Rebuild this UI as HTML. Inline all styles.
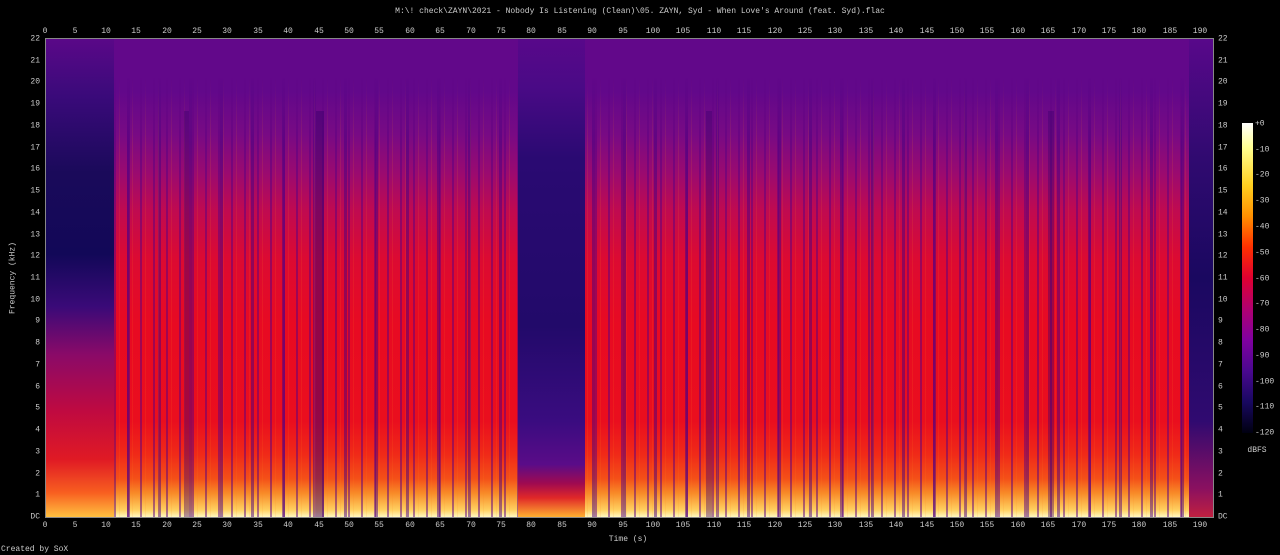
<!DOCTYPE html><html><head><meta charset="utf-8"><style>
*{margin:0;padding:0;box-sizing:border-box}
body{width:1280px;height:555px;background:#000;position:relative;overflow:hidden;font-family:"Liberation Mono","DejaVu Sans Mono",monospace;font-size:8px;color:#ccc}
.t{position:absolute;transform:translateX(-50%);white-space:nowrap;line-height:9px}
.fl{position:absolute;right:1240px;transform:translateY(-50%);line-height:9px}
.fr{position:absolute;left:1218px;transform:translateY(-50%);line-height:9px}
.d{position:absolute;left:1255px;transform:translateY(-50%);line-height:9px}
#plot{position:absolute;left:45px;top:38px;width:1169px;height:480px;border:1px solid #888;overflow:hidden;background:#5a088a}
.s{position:absolute;top:0;height:100%}
.loud{background:linear-gradient(180deg,#62088a 0%,#62088a 11%,#780a84 20%,#9a0a70 28%,#c00a50 36%,#dc0a32 46%,#e80a22 60%,#ea0e1e 80%,#f02a18 87%,#f45018 92%,#f88a28 95%,#ffd060 98.5%,#fff8c0 100%)}
.ov{position:absolute;inset:0;-webkit-mask-image:linear-gradient(180deg,transparent 8%,#000 22%);mask-image:linear-gradient(180deg,transparent 8%,#000 22%);background:repeating-linear-gradient(90deg,rgba(0,0,0,0) 0 3px,rgba(90,0,130,.5) 3px 5px,rgba(0,0,0,0) 5px 8px,rgba(255,140,30,.12) 8px 9px,rgba(0,0,0,0) 9px 13px),repeating-linear-gradient(90deg,rgba(0,0,0,0) 0 19px,rgba(70,0,130,.5) 19px 22px,rgba(0,0,0,0) 22px 31px)}
</style></head><body>
<div class="t" style="left:640px;top:7px">M:\! check\ZAYN\2021 - Nobody Is Listening (Clean)\05. ZAYN, Syd - When Love's Around (feat. Syd).flac</div>
<div id="plot">
<div class="s loud" style="left:68px;width:405px"></div>
<div class="s loud" style="left:539px;width:605px"></div>
<div class="ov"></div>
<div class="s" style="left:0;width:68px;background:linear-gradient(180deg,#5a0888 0%,#3a0a7a 12%,#1a0a5a 28%,#120858 45%,#3a0a78 56%,#8a0a68 66%,#c00a40 78%,#e01a24 88%,#f86020 95%,#ffc040 100%)"></div>
<div class="s" style="left:472px;width:67px;background:linear-gradient(180deg,#58088a 0%,#4a0a86 10%,#2a0a72 25%,#220a6a 60%,#3a0c80 80%,#5a0c88 89%,#a00a50 93%,#e02828 96%,#ffb030 100%)"></div>
<div class="s" style="left:1143px;width:26px;background:linear-gradient(180deg,#58088a 0%,#300a70 25%,#1a0860 50%,#300a70 80%,#8a1060 94%,#c02040 100%)"></div>
<div class="s" style="left:270px;width:8px;top:15%;background:rgba(60,0,110,.5)"></div>
<div class="s" style="left:138px;width:5px;top:15%;background:rgba(60,0,110,.4)"></div>
<div class="s" style="left:660px;width:6px;top:15%;background:rgba(60,0,110,.4)"></div>
<div class="s" style="left:1002px;width:6px;top:15%;background:rgba(60,0,110,.4)"></div>
</div>
<div style="position:absolute;left:1242px;top:123px;width:11px;height:310px;background:linear-gradient(180deg,#fff 0%,#ffff90 8%,#ffd020 20%,#ff9000 30%,#ff3000 40%,#e00030 50%,#b00070 60%,#8000a0 70%,#4a0890 80%,#180860 90%,#000010 100%)"></div>
<span class="d" style="top:124px">+0</span><span class="d" style="top:150px">-10</span><span class="d" style="top:175px">-20</span><span class="d" style="top:201px">-30</span><span class="d" style="top:227px">-40</span><span class="d" style="top:253px">-50</span><span class="d" style="top:279px">-60</span><span class="d" style="top:304px">-70</span><span class="d" style="top:330px">-80</span><span class="d" style="top:356px">-90</span><span class="d" style="top:382px">-100</span><span class="d" style="top:407px">-110</span><span class="d" style="top:433px">-120</span>
<div class="t" style="left:1257px;top:446px">dBFS</div>
<div class="t" style="left:628px;top:535px">Time (s)</div>
<div style="position:absolute;left:1px;top:545px;line-height:9px">Created by SoX</div>
<div style="position:absolute;left:13px;top:278px;transform:translate(-50%,-50%) rotate(-90deg);white-space:nowrap">Frequency (kHz)</div>
<span class="t" style="left:45px;top:27px">0</span><span class="t" style="left:75px;top:27px">5</span><span class="t" style="left:106px;top:27px">10</span><span class="t" style="left:136px;top:27px">15</span><span class="t" style="left:167px;top:27px">20</span><span class="t" style="left:197px;top:27px">25</span><span class="t" style="left:227px;top:27px">30</span><span class="t" style="left:258px;top:27px">35</span><span class="t" style="left:288px;top:27px">40</span><span class="t" style="left:319px;top:27px">45</span><span class="t" style="left:349px;top:27px">50</span><span class="t" style="left:379px;top:27px">55</span><span class="t" style="left:410px;top:27px">60</span><span class="t" style="left:440px;top:27px">65</span><span class="t" style="left:471px;top:27px">70</span><span class="t" style="left:501px;top:27px">75</span><span class="t" style="left:531px;top:27px">80</span><span class="t" style="left:562px;top:27px">85</span><span class="t" style="left:592px;top:27px">90</span><span class="t" style="left:623px;top:27px">95</span><span class="t" style="left:653px;top:27px">100</span><span class="t" style="left:683px;top:27px">105</span><span class="t" style="left:714px;top:27px">110</span><span class="t" style="left:744px;top:27px">115</span><span class="t" style="left:775px;top:27px">120</span><span class="t" style="left:805px;top:27px">125</span><span class="t" style="left:835px;top:27px">130</span><span class="t" style="left:866px;top:27px">135</span><span class="t" style="left:896px;top:27px">140</span><span class="t" style="left:927px;top:27px">145</span><span class="t" style="left:957px;top:27px">150</span><span class="t" style="left:987px;top:27px">155</span><span class="t" style="left:1018px;top:27px">160</span><span class="t" style="left:1048px;top:27px">165</span><span class="t" style="left:1079px;top:27px">170</span><span class="t" style="left:1109px;top:27px">175</span><span class="t" style="left:1139px;top:27px">180</span><span class="t" style="left:1170px;top:27px">185</span><span class="t" style="left:1200px;top:27px">190</span>
<span class="t" style="left:45px;top:521px">0</span><span class="t" style="left:75px;top:521px">5</span><span class="t" style="left:106px;top:521px">10</span><span class="t" style="left:136px;top:521px">15</span><span class="t" style="left:167px;top:521px">20</span><span class="t" style="left:197px;top:521px">25</span><span class="t" style="left:227px;top:521px">30</span><span class="t" style="left:258px;top:521px">35</span><span class="t" style="left:288px;top:521px">40</span><span class="t" style="left:319px;top:521px">45</span><span class="t" style="left:349px;top:521px">50</span><span class="t" style="left:379px;top:521px">55</span><span class="t" style="left:410px;top:521px">60</span><span class="t" style="left:440px;top:521px">65</span><span class="t" style="left:471px;top:521px">70</span><span class="t" style="left:501px;top:521px">75</span><span class="t" style="left:531px;top:521px">80</span><span class="t" style="left:562px;top:521px">85</span><span class="t" style="left:592px;top:521px">90</span><span class="t" style="left:623px;top:521px">95</span><span class="t" style="left:653px;top:521px">100</span><span class="t" style="left:683px;top:521px">105</span><span class="t" style="left:714px;top:521px">110</span><span class="t" style="left:744px;top:521px">115</span><span class="t" style="left:775px;top:521px">120</span><span class="t" style="left:805px;top:521px">125</span><span class="t" style="left:835px;top:521px">130</span><span class="t" style="left:866px;top:521px">135</span><span class="t" style="left:896px;top:521px">140</span><span class="t" style="left:927px;top:521px">145</span><span class="t" style="left:957px;top:521px">150</span><span class="t" style="left:987px;top:521px">155</span><span class="t" style="left:1018px;top:521px">160</span><span class="t" style="left:1048px;top:521px">165</span><span class="t" style="left:1079px;top:521px">170</span><span class="t" style="left:1109px;top:521px">175</span><span class="t" style="left:1139px;top:521px">180</span><span class="t" style="left:1170px;top:521px">185</span><span class="t" style="left:1200px;top:521px">190</span>
<span class="fl" style="top:517px">DC</span><span class="fl" style="top:495px">1</span><span class="fl" style="top:474px">2</span><span class="fl" style="top:452px">3</span><span class="fl" style="top:430px">4</span><span class="fl" style="top:408px">5</span><span class="fl" style="top:387px">6</span><span class="fl" style="top:365px">7</span><span class="fl" style="top:343px">8</span><span class="fl" style="top:321px">9</span><span class="fl" style="top:300px">10</span><span class="fl" style="top:278px">11</span><span class="fl" style="top:256px">12</span><span class="fl" style="top:235px">13</span><span class="fl" style="top:213px">14</span><span class="fl" style="top:191px">15</span><span class="fl" style="top:169px">16</span><span class="fl" style="top:148px">17</span><span class="fl" style="top:126px">18</span><span class="fl" style="top:104px">19</span><span class="fl" style="top:82px">20</span><span class="fl" style="top:61px">21</span><span class="fl" style="top:39px">22</span>
<span class="fr" style="top:517px">DC</span><span class="fr" style="top:495px">1</span><span class="fr" style="top:474px">2</span><span class="fr" style="top:452px">3</span><span class="fr" style="top:430px">4</span><span class="fr" style="top:408px">5</span><span class="fr" style="top:387px">6</span><span class="fr" style="top:365px">7</span><span class="fr" style="top:343px">8</span><span class="fr" style="top:321px">9</span><span class="fr" style="top:300px">10</span><span class="fr" style="top:278px">11</span><span class="fr" style="top:256px">12</span><span class="fr" style="top:235px">13</span><span class="fr" style="top:213px">14</span><span class="fr" style="top:191px">15</span><span class="fr" style="top:169px">16</span><span class="fr" style="top:148px">17</span><span class="fr" style="top:126px">18</span><span class="fr" style="top:104px">19</span><span class="fr" style="top:82px">20</span><span class="fr" style="top:61px">21</span><span class="fr" style="top:39px">22</span>
</body></html>
